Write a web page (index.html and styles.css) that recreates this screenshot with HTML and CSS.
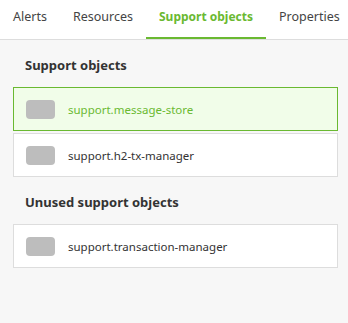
FILE: index.html
```html
<!DOCTYPE html>
<html lang="en">
<head>
  <meta charset="UTF-8">
  <title>Support objects</title>
  <link rel="stylesheet" href="styles.css">
</head>
<body>

  <!-- Tabs -->
  <nav class="tabs">
    <a href="#" class="tab">Alerts</a>
    <a href="#" class="tab">Resources</a>
    <a href="#" class="tab active">Support objects</a>
    <a href="#" class="tab">Properties</a>
  </nav>

  <main class="content">
    <h2 class="section-title">Support objects</h2>
    <div class="list">
      <div class="item selected">
        <span class="item-icon"></span>
        <span class="item-name">support.message-store</span>
      </div>
      <div class="item">
        <span class="item-icon"></span>
        <span class="item-name">support.h2-tx-manager</span>
      </div>
    </div>

    <h2 class="section-title">Unused support objects</h2>
    <div class="list">
      <div class="item">
        <span class="item-icon"></span>
        <span class="item-name">support.transaction-manager</span>
      </div>
    </div>
  </main>

</body>
</html>
```

FILE: styles.css
```css
* {
  margin: 0;
  padding: 0;
  box-sizing: border-box;
}

body {
  font-family: 'Noto Sans', 'Open Sans', sans-serif;
  background: #f7f7f7;
  color: #333;
  height: 100vh;
  overflow: hidden;
}

.tabs {
  display: flex;
  background: #fff;
  border-bottom: 1px solid #ddd;
  height: 40px;
  white-space: nowrap;
}

.tab {
  display: block;
  padding: 8px 13px 0;
  font-size: 12.5px;
  line-height: 18px;
  color: #444;
  text-decoration: none;
  border-bottom: 2px solid transparent;
}

.tab.active {
  font-size: 12px;
  color: #6ab931;
  font-weight: bold;
  border-bottom-color: #6ab931;
}

.content {
  padding: 16px 10px 0 13px;
}

.section-title {
  font-size: 13px;
  font-weight: bold;
  line-height: 18px;
  color: #333;
  padding-left: 12px;
  margin-bottom: 13px;
}

.list {
  display: flex;
  flex-direction: column;
  gap: 2px;
  margin-bottom: 16px;
}

.item {
  display: flex;
  align-items: center;
  height: 44px;
  padding: 0 12px;
  background: #fff;
  border: 1px solid #ddd;
}

.item.selected {
  background: #f1fde9;
  border-color: #6ab931;
}

.item-icon {
  width: 29px;
  height: 19px;
  border-radius: 4px;
  background: #bdbdbd;
  margin-right: 13px;
  flex-shrink: 0;
}

.item-name {
  font-size: 11.5px;
  color: #333;
}

.item.selected .item-name {
  color: #6ab931;
}
```
